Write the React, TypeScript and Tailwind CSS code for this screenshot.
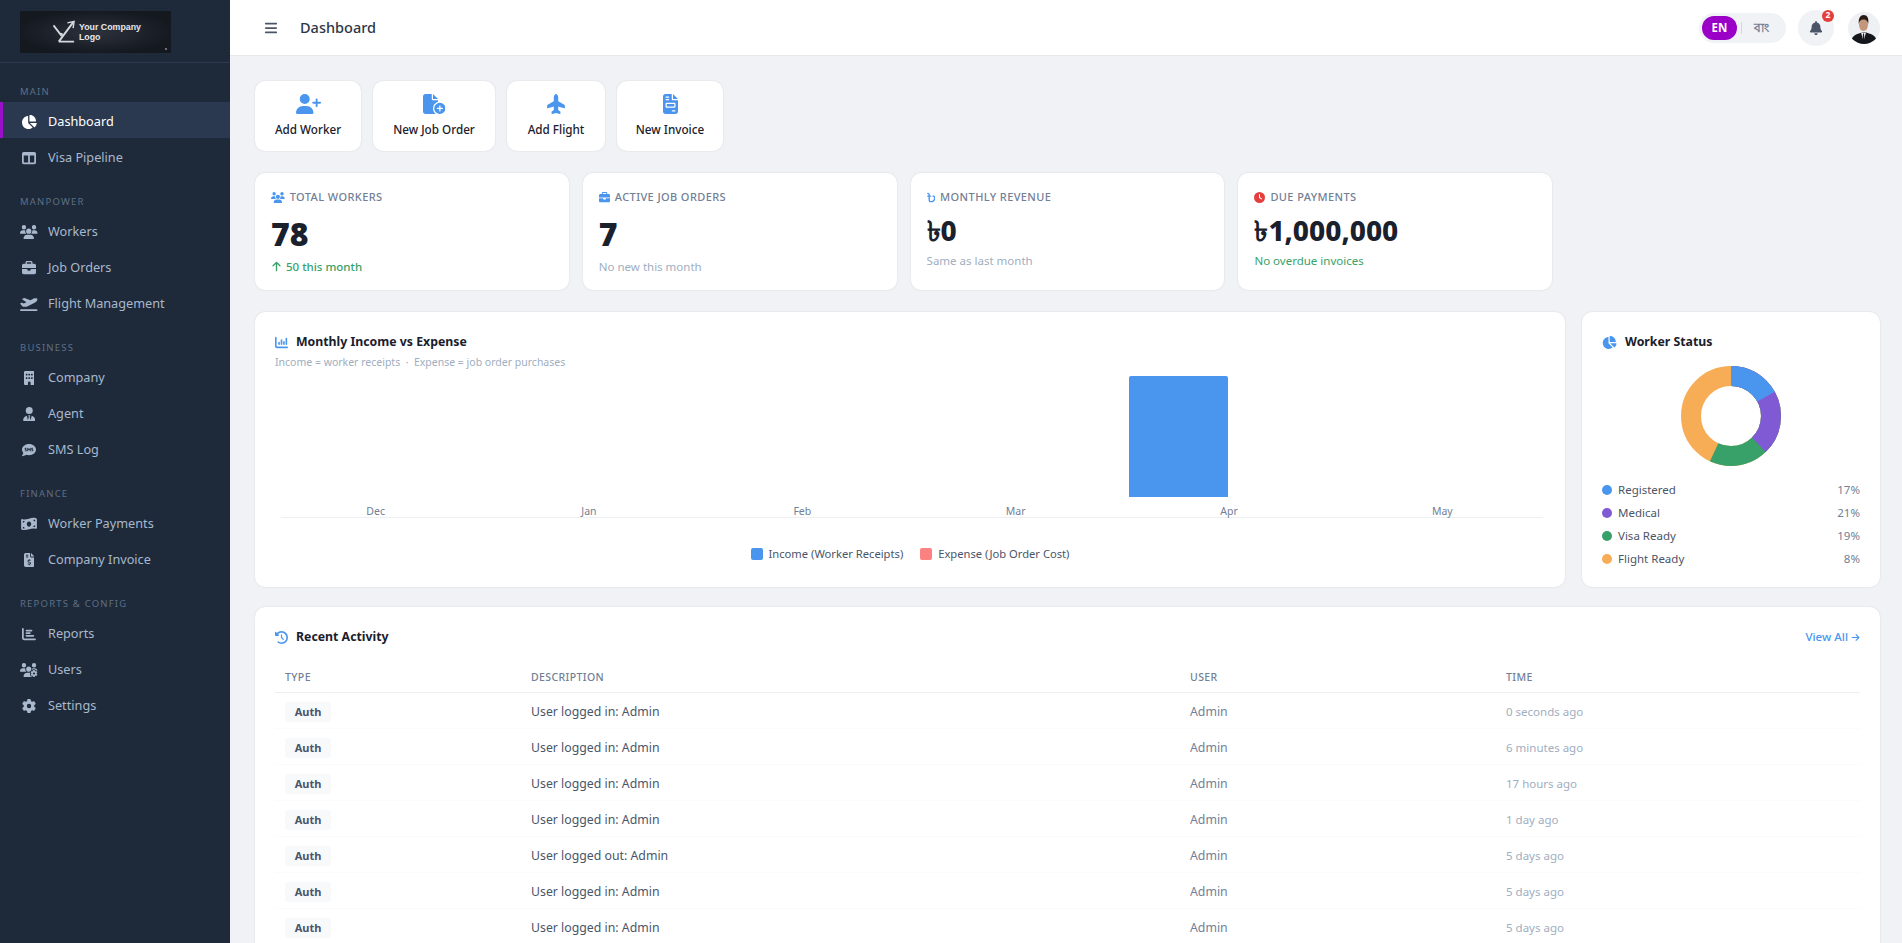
import type { ReactNode } from "react";
import type { IconType } from "react-icons";
import {
  FaArrowRight,
  FaArrowUp,
  FaBangladeshiTakaSign,
  FaBars,
  FaBell,
  FaBriefcase,
  FaBuilding,
  FaChartBar,
  FaChartColumn,
  FaChartPie,
  FaClock,
  FaClockRotateLeft,
  FaCommentSms,
  FaFileCirclePlus,
  FaFileInvoice,
  FaFileInvoiceDollar,
  FaGear,
  FaMoneyBillWave,
  FaPlane,
  FaPlaneDeparture,
  FaTableColumns,
  FaUserPlus,
  FaUserTie,
  FaUsers,
  FaUsersGear,
} from "react-icons/fa6";

const navSections: { title: string; items: { label: string; icon: IconType; iconSize: string; active?: boolean }[] }[] = [
  {
    title: "MAIN",
    items: [
      { label: "Dashboard", icon: FaChartPie, iconSize: "h-[14px] w-[16px]", active: true },
      { label: "Visa Pipeline", icon: FaTableColumns, iconSize: "h-[14px] w-[14px]" },
    ],
  },
  {
    title: "MANPOWER",
    items: [
      { label: "Workers", icon: FaUsers, iconSize: "h-[14px] w-[17.5px]" },
      { label: "Job Orders", icon: FaBriefcase, iconSize: "h-[14px] w-[14px]" },
      { label: "Flight Management", icon: FaPlaneDeparture, iconSize: "h-[14px] w-[17.5px]" },
    ],
  },
  {
    title: "BUSINESS",
    items: [
      { label: "Company", icon: FaBuilding, iconSize: "h-[14px] w-[10.5px]" },
      { label: "Agent", icon: FaUserTie, iconSize: "h-[14px] w-[12.5px]" },
      { label: "SMS Log", icon: FaCommentSms, iconSize: "h-[14px] w-[14px]" },
    ],
  },
  {
    title: "FINANCE",
    items: [
      { label: "Worker Payments", icon: FaMoneyBillWave, iconSize: "h-[14px] w-[16px]" },
      { label: "Company Invoice", icon: FaFileInvoiceDollar, iconSize: "h-[14px] w-[10.5px]" },
    ],
  },
  {
    title: "REPORTS & CONFIG",
    items: [
      { label: "Reports", icon: FaChartBar, iconSize: "h-[14px] w-[14px]" },
      { label: "Users", icon: FaUsersGear, iconSize: "h-[14px] w-[17.5px]" },
      { label: "Settings", icon: FaGear, iconSize: "h-[14px] w-[14px]" },
    ],
  },
];

const quickActions = [
  { label: "Add Worker", icon: <FaUserPlus className="h-5 w-[25px]" />, width: "w-[106px]" },
  { label: "New Job Order", icon: <FaFileCirclePlus className="h-5 w-[22.5px]" />, width: "w-[122px]" },
  { label: "Add Flight", icon: <FaPlane className="h-5 w-5 -rotate-90" />, width: "w-[98px]" },
  { label: "New Invoice", icon: <FaFileInvoice className="h-5 w-[15px]" />, width: "w-[106px]" },
];

const months = ["Dec", "Jan", "Feb", "Mar", "Apr", "May"];

const statusLegend = [
  { label: "Registered", pct: "17%", dot: "bg-[#4a96ee]" },
  { label: "Medical", pct: "21%", dot: "bg-[#805ad5]" },
  { label: "Visa Ready", pct: "19%", dot: "bg-[#38a169]" },
  { label: "Flight Ready", pct: "8%", dot: "bg-[#f6ad55]" },
];

const activity = [
  { desc: "User logged in: Admin", time: "0 seconds ago" },
  { desc: "User logged in: Admin", time: "6 minutes ago" },
  { desc: "User logged in: Admin", time: "17 hours ago" },
  { desc: "User logged in: Admin", time: "1 day ago" },
  { desc: "User logged out: Admin", time: "5 days ago" },
  { desc: "User logged in: Admin", time: "5 days ago" },
  { desc: "User logged in: Admin", time: "5 days ago" },
];

function Sidebar() {
  return (
    <aside className="flex w-[230px] shrink-0 flex-col bg-[#1e2a3a]">
      <div className="h-[63px] border-b border-[#2b3a4e] pl-5 pt-[11px]">
        <div className="relative flex h-[42px] w-[151px] items-center bg-[radial-gradient(ellipse_at_center,#2c323d_0%,#14181f_75%)] pl-[33px]">
          <svg viewBox="0 0 24 24" className="h-[24px] w-[23px] shrink-0" fill="none" stroke="#d5d8dc" strokeWidth="2">
            <path d="M.5 5L9 16M6 22L21 2M6 22h16M9 16v-3" />
            <path d="M15 2.500l7-1.500-1 7" strokeWidth="1.500" />
          </svg>
          <div className="ml-[3px] font-['Liberation_Sans',sans-serif] text-[8.8px] font-bold leading-[10px] text-[#e5e7ea]">
            <div>Your Company</div>
            <div>Logo</div>
          </div>
          <span className="absolute bottom-[3px] right-[4px] size-[2px] rounded-full bg-[#8a8f98]" />
        </div>
      </div>
      <nav className="flex-1 pt-px">
        {navSections.map((section) => (
          <div key={section.title}>
            <div className="flex h-[38px] items-end pb-[3px] pl-5 text-[9.5px] tracking-[1.2px] text-[#5d6f86]">{section.title}</div>
            {section.items.map((item) => (
              <div
                key={item.label}
                className={
                  item.active
                    ? "flex h-9 items-center border-l-[3px] border-[#9b0fc9] bg-[#2a3950] pl-[17px] pt-[4px] text-[12.7px] text-white"
                    : "flex h-9 items-center pl-5 pt-[4px] text-[12.7px] text-[#a9b8cc]"
                }
              >
                <span className="mr-[10px] flex w-[18px] shrink-0 justify-center">
                  <item.icon className={item.iconSize} />
                </span>
                {item.label}
              </div>
            ))}
          </div>
        ))}
      </nav>
    </aside>
  );
}

function Topbar() {
  return (
    <header className="flex h-[56px] shrink-0 items-center border-b border-[#e6e8ec] bg-white pl-[34px] pr-[22px]">
      <FaBars className="size-[14px] text-[#4a5568]" />
      <h1 className="ml-[22px] text-[14.5px] font-medium text-[#2d3748]">Dashboard</h1>
      <div className="ml-auto flex h-[30px] w-[87px] items-center rounded-full bg-[#f0f2f5] pl-[3px]">
        <span className="flex h-6 w-[35px] items-center justify-center rounded-full bg-[#9b00c7] text-[11.5px] font-bold text-white">EN</span>
        <span className="ml-1 h-3 w-px bg-[#d5d9df]" />
        <span className="ml-3 text-[11.5px] font-semibold text-[#718096]">বাং</span>
      </div>
      <div className="relative ml-3 flex size-9 items-center justify-center rounded-full bg-[#f0f2f5]">
        <FaBell className="size-[14px] text-[#4a5568]" />
        <span className="absolute right-0 top-0 flex size-3 items-center justify-center rounded-full bg-[#e53e3e] text-[8.5px] font-bold text-white">2</span>
      </div>
      <svg viewBox="0 0 32 32" className="ml-[14px] size-[32px] rounded-full bg-[#eef0f3]">
        <path d="M3 32c0-7 3-9 8-10.500l4-1.500 2 0 4 1.500c5 1.500 8 3.500 8 10.500z" fill="#14171c" />
        <path d="M13 20.500l2.500 9 2.500-9z" fill="#f2f2f2" />
        <path d="M15 21.500h1l.7 9h-2.400z" fill="#14171c" />
        <ellipse cx="15.500" cy="13" rx="4.500" ry="6" fill="#c4977c" />
        <path d="M10.800 12c-.6-6 1.700-9 5-9s5.300 3 4.400 9c-.7-3-1.900-4.500-4.700-4.500s-4 1.500-4.700 4.500z" fill="#2a1c14" />
      </svg>
    </header>
  );
}

function StatCard({ icon, label, value, note, big }: { icon: ReactNode; label: string; value: ReactNode; note: ReactNode; big?: boolean }) {
  return (
    <div className="h-[117px] rounded-[10px] bg-white pl-4 pt-[17px] shadow-[0_0_2px_rgba(0,0,0,0.12)]">
      <div className="flex h-[14px] items-center gap-[5px] text-[11px] font-medium tracking-[0.4px] text-[#718096]">
        {icon}
        {label}
      </div>
      {big ? (
        <div className="mt-[9px] text-[32px] font-black leading-[42px] text-[#1a202c]">{value}</div>
      ) : (
        <div className="mt-[8px] text-[28px] font-extrabold leading-[36px] text-[#1a202c]">{value}</div>
      )}
      <div className={big ? "mt-[3px] text-[11.5px]" : "mt-[4px] text-[11.5px]"}>{note}</div>
    </div>
  );
}

function IncomeChart() {
  return (
    <div className="h-[275px] min-w-0 flex-1 rounded-[10px] bg-white px-5 pt-[21px] shadow-[0_0_2px_rgba(0,0,0,0.12)]">
      <div className="flex h-[18px] items-center text-[12.3px] font-bold text-[#1a202c]">
        <span className="flex w-[21px]">
          <FaChartColumn className="size-[13px] text-[#4a96ee]" />
        </span>
        Monthly Income vs Expense
      </div>
      <div className="mt-[3px] text-[10.5px] leading-[16px] text-[#a0aec0]">Income = worker receipts &nbsp;·&nbsp; Expense = job order purchases</div>
      <div className="-ml-[6px] mt-[6px] flex h-[141px] w-[1280px]">
        {months.map((month) => (
          <div key={month} className="flex flex-1 flex-col items-center justify-end">
            {month === "Apr" ? <div className="mr-[100px] h-[121px] w-[99px] rounded-t-[2px] bg-[#4a96ee]" /> : null}
            <div className="mt-[8px] text-[10.5px] leading-[12px] text-[#718096]">{month}</div>
          </div>
        ))}
      </div>
      <div className="ml-[6px] mr-[2px] h-px bg-[#edf0f3]" />
      <div className="mt-[28px] flex items-center justify-center text-[11.2px] text-[#4a5568]">
        <span className="size-3 rounded-[2px] bg-[#4a96ee]" />
        <span className="ml-[6px]">Income (Worker Receipts)</span>
        <span className="ml-[17px] size-3 rounded-[2px] bg-[#fc8181]" />
        <span className="ml-[6px]">Expense (Job Order Cost)</span>
      </div>
    </div>
  );
}

function StatusDonut() {
  return (
    <svg viewBox="0 0 100 100" className="size-[100px] -rotate-90">
      <circle cx="50" cy="50" r="40" fill="none" strokeWidth="20" stroke="#f6ad55" />
      <circle cx="50" cy="50" r="40" fill="none" strokeWidth="20" stroke="#38a169" pathLength="360" strokeDasharray="205 155" />
      <circle cx="50" cy="50" r="40" fill="none" strokeWidth="20" stroke="#805ad5" pathLength="360" strokeDasharray="136 224" />
      <circle cx="50" cy="50" r="40" fill="none" strokeWidth="20" stroke="#4a96ee" pathLength="360" strokeDasharray="61 299" />
    </svg>
  );
}

function WorkerStatus() {
  return (
    <div className="h-[275px] w-[298px] shrink-0 rounded-[10px] bg-white px-5 pt-[21px] shadow-[0_0_2px_rgba(0,0,0,0.12)]">
      <div className="flex h-[18px] items-center text-[12.3px] font-bold text-[#1a202c]">
        <span className="flex w-[23px]">
          <FaChartPie className="h-[13px] w-[14.6px] text-[#4a96ee]" />
        </span>
        Worker Status
      </div>
      <div className="mt-[15px] flex justify-center">
        <StatusDonut />
      </div>
      <div className="mt-[12px]">
        {statusLegend.map((row) => (
          <div key={row.label} className="flex h-[23px] items-center text-[11.5px] text-[#4a5568]">
            <span className={`size-[10px] rounded-full ${row.dot}`} />
            <span className="ml-[6px]">{row.label}</span>
            <span className="ml-auto text-[#718096]">{row.pct}</span>
          </div>
        ))}
      </div>
    </div>
  );
}

function RecentActivity() {
  return (
    <div className="rounded-[10px] bg-white px-5 pb-5 pt-[20px] shadow-[0_0_2px_rgba(0,0,0,0.12)]">
      <div className="flex h-[20px] items-center text-[12.3px] font-bold text-[#1a202c]">
        <span className="flex w-[21px]">
          <FaClockRotateLeft className="size-[13px] text-[#4a96ee]" />
        </span>
        Recent Activity
        <span className="ml-auto flex items-center gap-[3px] text-[11.5px] font-medium text-[#4a96ee]">
          View All
          <FaArrowRight className="size-[9px]" />
        </span>
      </div>
      <table className="mt-[10px] w-full table-fixed border-collapse">
        <thead>
          <tr className="h-[35px] border-b border-[#eceef2] text-left text-[10.5px] font-medium tracking-[0.4px] text-[#718096]">
            <th className="w-[246px] pl-[10px] pt-[7px] font-medium">TYPE</th>
            <th className="w-[659px] pl-[10px] pt-[7px] font-medium">DESCRIPTION</th>
            <th className="w-[316px] pl-[10px] pt-[7px] font-medium">USER</th>
            <th className="pl-[10px] pt-[7px] font-medium">TIME</th>
          </tr>
        </thead>
        <tbody>
          {activity.map((row, i) => (
            <tr key={i} className="h-9 border-b border-[#fafbfc] text-[12.3px] text-[#4a5568]">
              <td className="pl-[10px] pt-[4px]">
                <span className="inline-block h-5 w-[46px] rounded-[4px] bg-[#f8f9fb] text-center text-[11px] font-bold leading-5 text-[#4a5568]">Auth</span>
              </td>
              <td className="pl-[10px] pt-[4px]">{row.desc}</td>
              <td className="pl-[10px] pt-[4px] text-[#718096]">Admin</td>
              <td className="pl-[10px] pt-[4px] text-[11.5px] text-[#a0aec0]">{row.time}</td>
            </tr>
          ))}
        </tbody>
      </table>
    </div>
  );
}

export default function App() {
  return (
    <div className="flex h-[943px] overflow-hidden bg-[#f0f2f5] font-['Noto_Sans',sans-serif]">
      <Sidebar />
      <div className="flex min-w-0 flex-1 flex-col">
        <Topbar />
        <main className="flex min-h-0 flex-1 flex-col overflow-hidden pl-[25px] pr-[22px] pt-[25px]">
          <div className="flex shrink-0 gap-3">
            {quickActions.map((action) => (
              <div
                key={action.label}
                className={`flex h-[70px] flex-col items-center rounded-[10px] bg-white pt-[13px] text-[#4a96ee] shadow-[0_0_2px_rgba(0,0,0,0.12)] ${action.width}`}
              >
                {action.icon}
                <span className="mt-[7px] text-[11.7px] font-medium text-[#1a202c]">{action.label}</span>
              </div>
            ))}
          </div>
          <div className="mt-[22px] grid shrink-0 grid-cols-5 gap-[14px]">
            <StatCard
              big
              icon={<FaUsers className="h-[11px] w-[13.75px] text-[#4a96ee]" />}
              label="TOTAL WORKERS"
              value="78"
              note={
                <span className="flex items-center gap-1 font-medium text-[#38a169]">
                  <FaArrowUp className="size-[11px]" />
                  50 this month
                </span>
              }
            />
            <StatCard
              big
              icon={<FaBriefcase className="h-[11px] w-[11px] text-[#4a96ee]" />}
              label="ACTIVE JOB ORDERS"
              value="7"
              note={<span className="text-[#a0aec0]">No new this month</span>}
            />
            <StatCard
              icon={<FaBangladeshiTakaSign className="h-[11px] w-[8.5px] text-[#4a96ee]" />}
              label="MONTHLY REVENUE"
              value="৳0"
              note={<span className="text-[#a0aec0]">Same as last month</span>}
            />
            <StatCard
              icon={<FaClock className="h-[11px] w-[11px] text-[#e53e3e]" />}
              label="DUE PAYMENTS"
              value="৳1,000,000"
              note={<span className="text-[#38a169]">No overdue invoices</span>}
            />
          </div>
          <div className="mt-[22px] flex shrink-0 gap-[17px]">
            <IncomeChart />
            <WorkerStatus />
          </div>
          <div className="mt-[20px] shrink-0">
            <RecentActivity />
          </div>
        </main>
      </div>
    </div>
  );
}
